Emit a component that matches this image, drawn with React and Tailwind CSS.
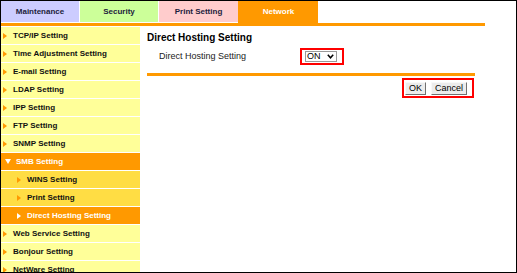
const menu = [
  { label: 'TCP/IP Setting' },
  { label: 'Time Adjustment Setting' },
  { label: 'E-mail Setting' },
  { label: 'LDAP Setting' },
  { label: 'IPP Setting' },
  { label: 'FTP Setting' },
  { label: 'SNMP Setting' },
  { label: 'SMB Setting', open: true, active: true },
  { label: 'WINS Setting', sub: true },
  { label: 'Print Setting', sub: true },
  { label: 'Direct Hosting Setting', sub: true, active: true },
  { label: 'Web Service Setting' },
  { label: 'Bonjour Setting' },
  { label: 'NetWare Setting' },
];

const tabs = [
  { label: 'Maintenance', cls: 'w-[78px] bg-[#ccccff] text-[#1c1c3c] mr-px mb-px' },
  { label: 'Security', cls: 'w-[78px] bg-[#ccff99] text-[#1c1c3c] mr-px mb-px' },
  { label: 'Print Setting', cls: 'w-[79px] bg-[#ffcccc] text-[#1c1c3c] mb-px' },
  { label: 'Network', cls: 'w-[80px] bg-[#ff9900] text-white pl-px' },
];

function Arrow({ color, down }) {
  if (down) {
    return (
      <svg width="6" height="5" viewBox="0 0 6 5" className="shrink-0">
        <path d="M0 0H6L3 5Z" fill={color} />
      </svg>
    );
  }
  return (
    <svg width="4" height="6" viewBox="0 0 4 6" className="shrink-0">
      <path d="M0 0L4 3L0 6Z" fill={color} />
    </svg>
  );
}

function MenuRow({ item }) {
  const bg = item.active ? 'bg-[#ff9900] text-white' : item.sub ? 'bg-[#ffdd44] text-[#111]' : 'bg-[#ffff99] text-[#111]';
  const pad = item.open ? 'pl-[4px] gap-[5px]' : item.sub ? 'pl-[16px] gap-[6px]' : 'pl-[2px] gap-[6px]';
  const arrowColor = item.active ? '#ffffff' : '#ff9900';
  return (
    <div className={`h-[17px] shrink-0 flex items-center text-[8px] font-bold whitespace-nowrap ${bg} ${pad}`}>
      <Arrow color={arrowColor} down={item.open} />
      <span>{item.label}</span>
    </div>
  );
}

export default function App() {
  return (
    <div className="w-[517px] h-[273px] border border-black bg-white overflow-hidden flex flex-col font-['Liberation_Sans',Arial,sans-serif]">
      <div className="flex h-[22px] shrink-0">
        {tabs.map((t) => (
          <div key={t.label} className={`flex items-center justify-center text-[8px] font-bold ${t.cls}`}>
            {t.label}
          </div>
        ))}
      </div>
      <div className="w-[484px] h-[3px] bg-[#ff9900] shrink-0" />
      <div className="flex flex-1 min-h-0 pt-px">
        <div className="w-[139px] flex flex-col gap-px bg-white shrink-0">
          {menu.map((m) => (
            <MenuRow key={m.label} item={m} />
          ))}
        </div>
        <div className="w-[335px] pl-[7px] flex flex-col">
          <div className="mt-[5px] text-[10px] leading-[12px] font-bold text-black">Direct Hosting Setting</div>
          <div className="mt-[4px] flex items-center">
            <div className="w-[153px] pl-[12px] text-[9px] text-[#222]">Direct Hosting Setting</div>
            <div className="h-[17px] border-2 border-[#ff0000] pl-[3px] pr-[5px] flex items-center">
              <div className="w-[32px] h-[11px] border border-[#9a9a9a] bg-white flex items-center justify-between pl-[1px] pr-[2px] text-[9px] leading-none text-black">
                <span>ON</span>
                <svg width="7" height="5" viewBox="0 0 7 5">
                  <path d="M0.8 0.8L3.5 3.8L6.2 0.8" fill="none" stroke="#000" strokeWidth="1.5" />
                </svg>
              </div>
            </div>
          </div>
          <div className="mt-[8px] h-[3px] bg-[#ff9900]" />
          <div className="mt-[2px] flex justify-end pr-[1px]">
            <div className="h-[20px] border-2 border-[#ff0000] pl-[1px] pr-[5px] flex items-center gap-[5px]">
              <button className="h-[13px] px-[3px] bg-[#ececec] border border-t-[#f8f8f8] border-l-[#f8f8f8] border-b-[#707070] border-r-[#707070] text-[9px] leading-none text-black">
                OK
              </button>
              <button className="h-[13px] px-[3px] bg-[#ececec] border border-t-[#f8f8f8] border-l-[#f8f8f8] border-b-[#707070] border-r-[#707070] text-[9px] leading-none text-black">
                Cancel
              </button>
            </div>
          </div>
        </div>
      </div>
    </div>
  );
}
